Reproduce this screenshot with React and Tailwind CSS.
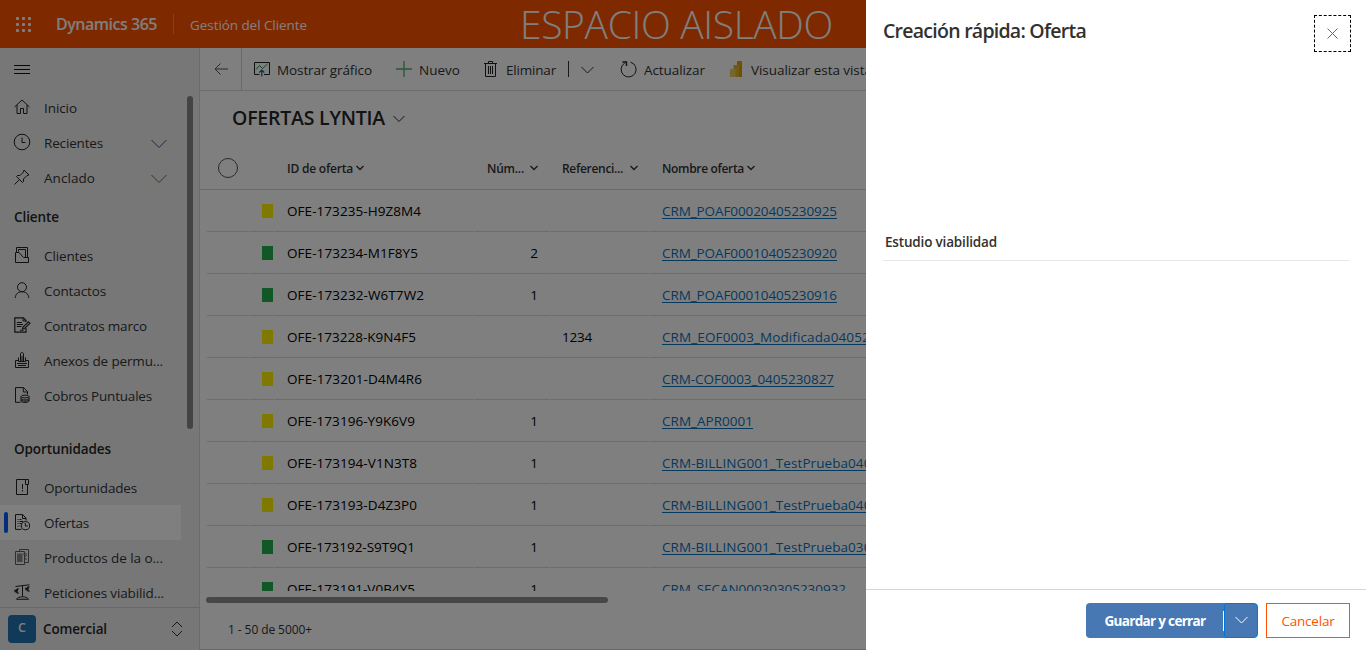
import { useLayoutEffect, useRef } from "react";

/* Text run whose letter-spacing is computed so that it fills the given width. */
function Fit({ w, className = "", children }) {
  const ref = useRef(null);
  useLayoutEffect(() => {
    const el = ref.current;
    el.style.letterSpacing = "0px";
    const n = el.textContent.length;
    const natural = el.getBoundingClientRect().width;
    el.style.letterSpacing = `${((w - natural) / n).toFixed(3)}px`;
  }, [w, children]);
  return (
    <span ref={ref} className={`inline-block shrink-0 whitespace-nowrap ${className}`}>
      {children}
    </span>
  );
}

function Chevron({ size = 12, width = 1, className = "" }) {
  return (
    <svg width={size} height={size / 2 + 2} viewBox={`0 0 ${size} ${size / 2 + 2}`} fill="none" stroke="currentColor" strokeWidth={width} className={`shrink-0 ${className}`}>
      <path d={`M0.5 1 L${size / 2} ${size / 2 + 0.5} L${size - 0.5} 1`} />
    </svg>
  );
}

const icons = {
  home: <path d="M0.5 8 L8 1 L15.5 8 M3 6 V14.5 H6.5 V9.5 H9.5 V14.5 H13 V6" />,
  clock: (
    <>
      <circle cx="8" cy="8" r="7.8" />
      <path d="M8 3.5 V8.5 H11.5" />
    </>
  ),
  pin: <path d="M0.5 15.5 L5 11 M2.5 7.5 L8.5 13.5 L9.5 12.5 V10 L13 6.5 L15 6 L10 1 L9.5 3 L6 6.5 H3.5 Z" />,
  clients: (
    <>
      <path d="M2.5 5 V0.5 H13.5 V11" />
      <path d="M4.5 4.5 V2.5 H11.5 V10" />
      <path d="M1.5 5.5 H5 L9.5 10.5 H14.5 V15.5 H1.5 Z" />
    </>
  ),
  person: (
    <>
      <circle cx="8" cy="5.2" r="4.5" />
      <path d="M1.2 16 C1.6 11.8 4.2 9.8 8 9.8 C11.8 9.8 14.4 11.8 14.8 16" />
    </>
  ),
  contract: (
    <>
      <path d="M12 5 V3.5 L9.5 0.8 H0.8 V15.2 H12 V11" strokeWidth="1.2" />
      <path d="M9 1 V4 H12 M2.8 5.5 H8 M2.8 7.5 H9 M2.8 9.5 H7.5 M6 13.3 H9.5" />
      <path d="M8.5 12 L9 10 L14.5 4.8 L16 6.2 L10.5 11.5 Z" strokeWidth="1.1" />
    </>
  ),
  annex: (
    <>
      <path d="M6.5 9.5 V2 C6.5 0 9.5 0 9.5 2 V9.5" />
      <path d="M4.5 5.5 V9.5 H11.5 V5.5 M8 4 V9" />
      <path d="M4.5 8.5 H1.5 V15.5 H14.5 V8.5 H11.5 M3 11.5 H13 M4 13.5 H12" />
    </>
  ),
  charges: (
    <>
      <path d="M13.5 7.5 V4.5 L9.5 0.6 H1.5 V15.3 H6.5 M9.3 0.8 V5 H13.5" />
      <ellipse cx="11" cy="9.5" rx="4" ry="1.4" />
      <path d="M7 9.5 V14 C7 16 14.5 16 15 14 V9.5 M7 11.5 C7 13.4 15 13.4 15 11.5 M7 13 C7.5 14.5 14.5 14.5 15 13" />
    </>
  ),
  opportunity: (
    <>
      <path d="M11.5 0.5 H2.5 V15.5 H13.5 V5.5 M11.5 0.5 V5.5 H14.5 V0.5 Z" />
      <path d="M8.5 5 V10 M8.5 11 V12.5" />
    </>
  ),
  offer: (
    <>
      <path d="M12 6.5 V4.2 L8.8 0.6 H1.5 V15.4 H7.5 M8.5 0.8 V4.5 H12" />
      <path d="M3.5 5.5 H4.5 M5.5 5.5 H7.5 M3.5 7.5 H4.5 M5.5 7.5 H9 M3.5 9.5 H4.5 M5.5 9.5 H7.5 M3.5 12 H4.5 M5.5 12 H6.5" />
      <circle cx="11.5" cy="11.7" r="4.1" />
      <path d="M11.3 9 V12 H13.8" />
    </>
  ),
  product: (
    <g opacity="0.7">
      <path d="M1.5 2.5 H10.5 V15.5 H1.5 Z M5.5 2.5 V0.5 H14.5 V13.5 H10.5" />
      <path d="M3 4.5 H8.5 V13 H3 Z" fill="currentColor" stroke="none" opacity="0.7" />
      <path d="M9 5 H13 M12.5 6 L10.5 8.5 L12.5 11" />
    </g>
  ),
  scales: (
    <>
      <path d="M1.5 2.5 L15.5 0.8 M8.5 1.8 V12.5 M2.5 15.3 C4 12 13 12 14.5 15.3 Z" />
      <path d="M4.8 5 C1.2 4 1.2 10 4.8 9 M0.3 6.4 H4 M0.3 7.8 H4" strokeWidth="1.1" />
      <path d="M15.6 3 C12 2 12 8 15.6 7 M11.2 4.4 H14.8 M11.2 5.8 H14.8" strokeWidth="1.1" />
    </>
  ),
};

function Icon({ name }) {
  return (
    <svg width="16" height="16" viewBox="0 0 16 16" fill="none" stroke="currentColor" strokeWidth="1" className="shrink-0 overflow-visible text-[#222]">
      {icons[name]}
    </svg>
  );
}

const topNav = [
  { icon: "home", label: "Inicio", w: 33 },
  { icon: "clock", label: "Recientes", w: 59, chevron: "text-[#1d5f9e]" },
  { icon: "pin", label: "Anclado", w: 51, chevron: "text-[#8f5a2c]" },
];
const clientNav = [
  { icon: "clients", label: "Clientes", w: 49 },
  { icon: "person", label: "Contactos", w: 62 },
  { icon: "contract", label: "Contratos marco", w: 103 },
  { icon: "annex", label: "Anexos de permu...", w: 119 },
  { icon: "charges", label: "Cobros Puntuales", w: 108 },
];
const salesNav = [
  { icon: "opportunity", label: "Oportunidades", w: 93 },
  { icon: "offer", label: "Ofertas", w: 45, active: true },
  { icon: "product", label: "Productos de la o...", w: 119 },
  { icon: "scales", label: "Peticiones viabilid...", w: 120 },
];

function NavItem({ icon, label, w, chevron, active }) {
  return (
    <div className={`flex h-[35px] w-[181px] shrink-0 items-center ${active ? "bg-white" : ""}`}>
      <div className={`ml-1 h-[21px] w-1 rounded-sm ${active ? "bg-[#0a5cf5]" : ""}`} />
      <div className="ml-1.5 mr-[14px] flex -translate-y-px">
        <Icon name={icon} />
      </div>
      <Fit w={w} className="pt-0.5 text-[13.5px] text-[#333]">{label}</Fit>
      {chevron && <Chevron size={16} className={`ml-auto mr-3.5 mt-0.5 ${chevron}`} />}
    </div>
  );
}

function NavHeading({ w, className = "", children }) {
  return (
    <div className={`flex h-[43px] shrink-0 items-center pl-[14px] pt-0.5 text-[13.5px] font-semibold text-[#262626] ${className}`}>
      <Fit w={w}>{children}</Fit>
    </div>
  );
}

function Sidebar() {
  return (
    <aside className="relative flex w-[200px] shrink-0 flex-col border-r border-[#d6d6d6] bg-[#efefef]">
      <div className="flex h-[42px] shrink-0 flex-col gap-[3px] pl-[14px] pt-[17px]">
        <div className="h-px w-4 bg-[#111]" />
        <div className="h-px w-4 bg-[#111]" />
        <div className="h-px w-4 bg-[#111]" />
      </div>
      <nav className="flex min-h-0 flex-1 flex-col overflow-hidden">
        {topNav.map((i) => <NavItem key={i.label} {...i} />)}
        <NavHeading w={45}>Cliente</NavHeading>
        {clientNav.map((i) => <NavItem key={i.label} {...i} />)}
        <NavHeading w={97} className="mt-[14px]">Oportunidades</NavHeading>
        {salesNav.map((i) => <NavItem key={i.label} {...i} />)}
      </nav>
      <div className="absolute right-1.5 top-12 h-[333px] w-1.5 rounded-full bg-[#868686]" />
      <div className="flex h-[43px] shrink-0 items-center border-t border-[#d0d0d0] pl-2">
        <div className="flex size-7 items-center justify-center rounded-sm bg-[#2272b0] pb-0.5 text-[12.5px] font-semibold text-white">
          C
        </div>
        <Fit w={64} className="ml-[7px] text-[13.5px] font-semibold text-[#262626]">Comercial</Fit>
        <svg width="12" height="16" viewBox="0 0 12 16" fill="none" stroke="#333" strokeWidth="1" className="ml-auto mr-4">
          <path d="M1 6 L6 1 L11 6 M1 10 L6 15 L11 10" />
        </svg>
      </div>
    </aside>
  );
}

function TopBar() {
  return (
    <header className="flex h-12 shrink-0 items-center overflow-hidden bg-[#ff5200] text-white">
      <div className="ml-4 grid grid-cols-3 gap-[3px]">
        {Array.from({ length: 9 }, (_, i) => <div key={i} className="size-[3px] rounded-[1px] bg-white" />)}
      </div>
      <Fit w={101} className="ml-[25px] text-base font-semibold">Dynamics 365</Fit>
      <div className="ml-4 h-5 w-px bg-white/30" />
      <Fit w={117} className="ml-4 mt-0.5 text-[13.5px]">Gestión del Cliente</Fit>
      <Fit w={313} className="ml-[213px] text-[39px] font-light leading-[48px]">ESPACIO AISLADO</Fit>
    </header>
  );
}

function CommandBar() {
  return (
    <div className="flex h-[43px] shrink-0 items-center overflow-hidden border-b border-[#d8d8d8] text-[13.5px] text-[#333]">
      <div className="flex h-full w-[42px] shrink-0 items-center justify-center border-r border-[#d0d0d0]">
        <svg width="14" height="12" viewBox="0 0 14 12" fill="none" stroke="#555" strokeWidth="1">
          <path d="M6.5 0.5 L1 6 L6.5 11.5 M1 6 H14" />
        </svg>
      </div>
      <svg width="16" height="16" viewBox="0 0 16 16" fill="none" className="ml-3 shrink-0">
        <path d="M5.5 13.5 H0.5 V1.5 H15.5 V13.5 H10" stroke="#222" />
        <path d="M2 8.5 L5.5 4.5 L8.5 7.5 L13.5 3" stroke="#2a8a3e" />
        <path d="M7.8 15.5 V9.5 M5.3 11.5 L7.8 9 L10.3 11.5" stroke="#1261a0" strokeWidth="1.2" />
      </svg>
      <Fit w={95} className="ml-[7px] pt-0.5">Mostrar gráfico</Fit>
      <svg width="16" height="16" viewBox="0 0 16 16" fill="none" stroke="#4fae6c" className="ml-6 shrink-0">
        <path d="M8 0 V16 M0 8 H16" strokeWidth="1.3" />
      </svg>
      <Fit w={41} className="ml-[7px] pt-0.5">Nuevo</Fit>
      <svg width="13" height="16" viewBox="0 0 13 16" fill="none" stroke="#222" className="ml-6 shrink-0">
        <path d="M0 2.5 H13 M4.5 2.5 V0.5 H8.5 V2.5 M1.5 2.5 V15.5 H11.5 V2.5 M4.5 5 V13 M6.5 5 V13 M8.5 5 V13" />
      </svg>
      <Fit w={50} className="ml-[9px] pt-0.5">Eliminar</Fit>
      <div className="ml-[12px] h-4 w-px bg-[#333]" />
      <Chevron size={13} className="ml-[12px] mt-0.5" />
      <svg width="17" height="17" viewBox="0 0 17 17" fill="none" stroke="#222" className="ml-[26px] shrink-0">
        <path d="M10.5 1.2 A7.5 7.5 0 1 1 4.8 2" />
        <path d="M2.5 1 H6.5 V5" strokeWidth="1.4" />
      </svg>
      <Fit w={61} className="ml-[7px] pt-0.5">Actualizar</Fit>
      <svg width="12" height="16" viewBox="0 0 12 16" className="ml-[25px] shrink-0">
        <rect x="7" y="0" width="5" height="16" rx="0.6" fill="#d9a400" />
        <rect x="3.5" y="4" width="5.5" height="12" rx="0.6" fill="#e3b52c" />
        <rect x="0" y="8" width="5.5" height="8" rx="0.6" fill="#f0cf5a" />
      </svg>
      <Fit w={199} className="ml-[9px] pt-0.5">Visualizar esta vista en Power BI</Fit>
    </div>
  );
}

const Y = "bg-[#fff200]";
const G = "bg-[#22b14c]";
const rows = [
  [Y, "OFE-173235-H9Z8M4", 134, "", "", "CRM_POAF00020405230925", 175],
  [G, "OFE-173234-M1F8Y5", 131, "2", "", "CRM_POAF00010405230920", 175],
  [G, "OFE-173232-W6T7W2", 137, "1", "", "CRM_POAF00010405230916", 175],
  [Y, "OFE-173228-K9N4F5", 129, "", "1234", "CRM_EOF0003_Modificada0405230840", 247],
  [Y, "OFE-173201-D4M4R6", 135, "", "", "CRM-COF0003_0405230827", 172],
  [Y, "OFE-173196-Y9K6V9", 128, "1", "", "CRM_APR0001", 91],
  [Y, "OFE-173194-V1N3T8", 130, "1", "", "CRM-BILLING001_TestPrueba0405230801", 264],
  [Y, "OFE-173193-D4Z3P0", 130, "1", "", "CRM-BILLING001_TestPrueba0405230755", 264],
  [G, "OFE-173192-S9T9Q1", 128, "1", "", "CRM-BILLING001_TestPrueba0305230940", 264],
  [G, "OFE-173191-V0B4Y5", 128, "1", "", "CRM_SECAN00030305230932", 184],
];

const cell = "flex h-[42px] items-center overflow-hidden border-b border-[#d9d9d9] pt-0.5";

function Grid() {
  return (
    <>
      <div className="flex h-[42px] shrink-0 items-center border-b border-[#d6d6d6] text-xs font-semibold text-[#333]">
        <div className="mb-0.5 ml-[18px] size-5 shrink-0 rounded-full border border-[#555]" />
        <Fit w={66} className="ml-[49px]">ID de oferta</Fit>
        <Chevron size={8} width={1.4} className="mb-0.5 ml-[3px]" />
        <Fit w={37} className="ml-[123px]">Núm...</Fit>
        <Chevron size={8} width={1.4} className="mb-0.5 ml-1.5" />
        <Fit w={61} className="ml-6">Referenci...</Fit>
        <Chevron size={8} width={1.4} className="mb-0.5 ml-[7px]" />
        <Fit w={82} className="ml-6">Nombre oferta</Fit>
        <Chevron size={8} width={1.4} className="mb-0.5 ml-[3px]" />
      </div>
      <div className="h-[401px] shrink-0 overflow-hidden pl-[7px] text-[13.5px] text-black">
        {rows.map(([color, id, idW, num, ref, name, nameW]) => (
          <div key={id} className="grid grid-cols-[42px_24px_199px_74px_99px_1fr] gap-px">
            <div className={cell} />
            <div className={`${cell} justify-end pr-px`}>
              <div className={`-mt-px h-3.5 w-[11px] ${color}`} />
            </div>
            <div className={`${cell} pl-3`}><Fit w={idW}>{id}</Fit></div>
            <div className={`${cell} justify-end pr-[11px]`}>{num}</div>
            <div className={`${cell} pl-3`}>{ref && <Fit w={30}>{ref}</Fit>}</div>
            <div className={`${cell} pl-3 text-[#0b72bd]`}>
              <Fit w={nameW} className="underline underline-offset-2">{name}</Fit>
            </div>
          </div>
        ))}
      </div>
      <div className="ml-1.5 mt-1.5 h-1.5 w-[402px] shrink-0 rounded-full bg-[#8f8f8f]" />
      <div className="flex flex-1 items-center border-b border-[#d0d0d0] pl-7 pt-2 text-xs text-[#333]">
        <Fit w={84}>1 - 50 de 5000+</Fit>
      </div>
    </>
  );
}

function QuickCreatePanel() {
  return (
    <section className="absolute inset-y-0 right-0 flex w-[500px] flex-col bg-white text-[#323130]">
      <div className="flex justify-between pl-[17px] pr-[15px] pt-[15px]">
        <Fit w={203} className="pt-px text-[19.5px] font-semibold leading-[30px]">Creación rápida: Oferta</Fit>
        <div className="flex size-[37px] items-center justify-center border border-dashed border-black">
          <svg width="11" height="11" viewBox="0 0 11 11" fill="none" stroke="#5a6b7a" strokeWidth="1">
            <path d="M0.5 0.5 L10.5 10.5 M10.5 0.5 L0.5 10.5" />
          </svg>
        </div>
      </div>
      <div className="ml-[17px] mr-4 mt-[173px] flex h-9 items-center border-b border-[#e8e8e8] pl-0.5">
        <Fit w={112} className="text-[13.5px] font-semibold">Estudio viabilidad</Fit>
      </div>
      <footer className="mt-auto flex h-[61px] items-start justify-end border-t border-[#d6d6d6] pr-4 pt-[13px]">
        <div className="flex h-[35px] w-[138px] items-center justify-center rounded-l-sm bg-[#4878b4] pt-0.5 text-white">
          <Fit w={101} className="text-[13.5px] font-bold">Guardar y cerrar</Fit>
        </div>
        <div className="-ml-px h-5 w-px self-start mt-2 bg-white" />
        <div className="flex h-[35px] w-[34px] items-center justify-center rounded-r-sm border border-[#0078d4] bg-[#4878b4] text-white">
          <Chevron size={13} />
        </div>
        <div className="ml-2 flex h-[35px] w-[84px] items-center justify-center border border-[#ff5200] pt-0.5 text-[#ff5200]">
          <Fit w={53} className="text-[13.5px]">Cancelar</Fit>
        </div>
      </footer>
    </section>
  );
}

export default function App() {
  return (
    <div className="relative flex h-[650px] w-[1366px] flex-col overflow-hidden bg-white font-['Open_Sans','Noto_Sans',sans-serif]">
      <TopBar />
      <div className="flex min-h-0 flex-1">
        <Sidebar />
        <main className="flex min-w-0 flex-1 flex-col">
          <CommandBar />
          <div className="flex h-[57px] shrink-0 items-center pb-1 pl-8 text-[#262626]">
            <Fit w={153} className="text-[19.5px] font-semibold">OFERTAS LYNTIA</Fit>
            <Chevron size={12} className="ml-2 mt-0.5" />
          </div>
          <Grid />
        </main>
      </div>
      <div className="absolute inset-0 bg-black/50" />
      <QuickCreatePanel />
    </div>
  );
}
